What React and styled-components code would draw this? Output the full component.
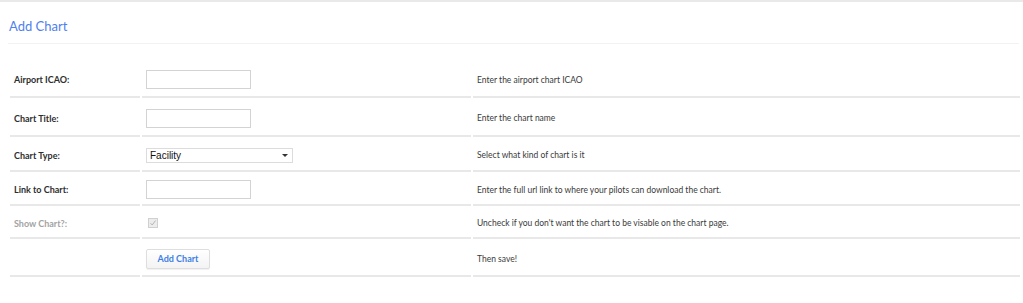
import React from "react";
import styled, { createGlobalStyle } from "styled-components";

const Global = createGlobalStyle`
  body {
    margin: 0;
    background: #ffffff;
    font-family: 'Lato', 'Open Sans', sans-serif;
  }
`;

const Page = styled.div`
  border-top: 2px solid #e9e9e9;
  padding: 0 2px 0 8px;
`;

const Header = styled.div`
  border-bottom: 1px solid #f2f2f2;
  padding: 15px 0 8px 1px;
  margin-right: 2px;
`;

const Title = styled.h2`
  margin: 0;
  font-size: 13px;
  line-height: 18px;
  font-weight: 400;
  color: #4f80ee;
`;

const Table = styled.table`
  width: 1014px;
  margin-top: 16px;
  border-spacing: 2px;
  font-size: 8.5px;
  color: #3a3a3a;
`;

const Cell = styled.td`
  box-sizing: border-box;
  height: ${(p) => p.$h}px;
  padding: 1px 4px 0;
  border-bottom: 2px solid #e8e8e8;
  vertical-align: middle;
  width: ${(p) => p.$w || "auto"};
`;

const Label = styled(Cell)`
  font-size: 9px;
  font-weight: 700;
  color: ${(p) => (p.$muted ? "#a3a3a3" : "#2e2e2e")};
`;

const TextInput = styled.input`
  display: block;
  box-sizing: border-box;
  width: 105px;
  height: 19px;
  margin: 0;
  border: 1px solid #d3d3d3;
  background: #fff;
`;

const Select = styled.div`
  box-sizing: border-box;
  width: 147px;
  height: 15px;
  border: 1px solid #dcdcdc;
  display: flex;
  align-items: center;
  justify-content: space-between;
  padding: 0 4px 0 3px;
  font-family: 'Liberation Sans', Arial, sans-serif;
  font-size: 10px;
  color: #111;
`;

const Arrow = styled.span`
  width: 0;
  height: 0;
  border-left: 3px solid transparent;
  border-right: 3px solid transparent;
  border-top: 3px solid #333;
`;

const Check = styled.span`
  display: block;
  box-sizing: border-box;
  width: 10px;
  height: 10px;
  margin-left: 2px;
  border: 1px solid #d0d0d0;
  background: #ececec;
  position: relative;
`;

const Button = styled.button`
  display: block;
  box-sizing: border-box;
  width: 64px;
  height: 20px;
  margin: 0;
  padding: 0;
  border: 1px solid #dedede;
  border-radius: 2px;
  background: linear-gradient(#ffffff, #f3f3f3);
  box-shadow: 0 1px 1px rgba(0, 0, 0, 0.06);
  font-family: 'Lato', sans-serif;
  font-size: 9px;
  font-weight: 700;
  color: #3c7fe4;
`;

const rows = [
  { label: "Airport ICAO:", field: "input", help: "Enter the airport chart ICAO", h: 36 },
  { label: "Chart Title:", field: "input", help: "Enter the chart name", h: 37 },
  { label: "Chart Type:", field: "select", help: "Select what kind of chart is it", h: 33 },
  { label: "Link to Chart:", field: "input", help: "Enter the full url link to where your pilots can download the chart.", h: 32 },
  { label: "Show Chart?:", field: "check", help: "Uncheck if you don't want the chart to be visable on the chart page.", muted: true, h: 31 },
  { label: "", field: "button", help: "Then save!", h: 36 },
];

function Field({ type }) {
  if (type === "input") return <TextInput type="text" />;
  if (type === "select")
    return (
      <Select>
        <span>Facility</span>
        <Arrow />
      </Select>
    );
  if (type === "check")
    return (
      <Check>
        <svg width="8" height="8" viewBox="0 0 8 8" style={{ position: "absolute", left: 0, top: 0 }}>
          <path d="M1.5 4.2 L3.2 6 L6.6 1.5" fill="none" stroke="#b5b5b5" strokeWidth="1" />
        </svg>
      </Check>
    );
  return <Button>Add Chart</Button>;
}

export default function App() {
  return (
    <Page>
      <Global />
      <Header>
        <Title>Add Chart</Title>
      </Header>
      <Table>
        <tbody>
          {rows.map((r, i) => (
            <tr key={i}>
              <Label $w="130px" $h={r.h} $muted={r.muted}>{r.label}</Label>
              <Cell $w="329px" $h={r.h}>
                <Field type={r.field} />
              </Cell>
              <Cell $h={r.h}>{r.help}</Cell>
            </tr>
          ))}
        </tbody>
      </Table>
    </Page>
  );
}
